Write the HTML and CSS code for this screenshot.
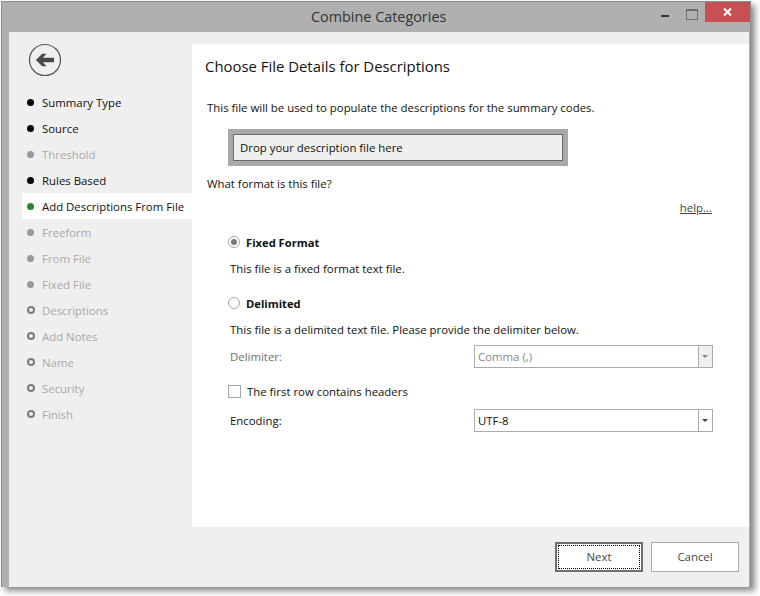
FILE: index.html
```html
<!DOCTYPE html>
<html lang="en">
<head>
  <meta charset="UTF-8">
  <title>Combine Categories</title>
  <link rel="stylesheet" href="styles.css">
</head>
<body>

  <div class="window">
    <div class="titlebar">
      <div class="title">Combine Categories</div>
      <div class="controls">
        <div class="ctl-min"></div>
        <div class="ctl-max"></div>
        <div class="ctl-close">
          <svg width="9" height="8" viewBox="0 0 9 8"><path d="M1 0.5L8 7.5M8 0.5L1 7.5" stroke="#fff" stroke-width="2" fill="none"/></svg>
        </div>
      </div>
    </div>

    <div class="content">
      <div class="sidebar">
        <div class="back">
          <svg width="34" height="34" viewBox="0 0 34 34">
            <circle cx="17" cy="17" r="15.5" fill="none" stroke="#555" stroke-width="1.2"/>
            <path d="M26 14.8H14.8L18.6 10.8H14.2L7.9 17L14.2 23.2H18.6L14.8 19.2H26Z" fill="#4a4a4a"/>
          </svg>
        </div>
        <div class="step done"><span class="dot"></span>Summary Type</div>
        <div class="step done"><span class="dot"></span>Source</div>
        <div class="step skipped"><span class="dot"></span>Threshold</div>
        <div class="step done"><span class="dot"></span>Rules Based</div>
        <div class="step active"><span class="dot"></span>Add Descriptions From File</div>
        <div class="step skipped"><span class="dot"></span>Freeform</div>
        <div class="step skipped"><span class="dot"></span>From File</div>
        <div class="step skipped"><span class="dot"></span>Fixed File</div>
        <div class="step todo"><span class="dot"></span>Descriptions</div>
        <div class="step todo"><span class="dot"></span>Add Notes</div>
        <div class="step todo"><span class="dot"></span>Name</div>
        <div class="step todo"><span class="dot"></span>Security</div>
        <div class="step todo"><span class="dot"></span>Finish</div>
      </div>

      <div class="main">
        <h1>Choose File Details for Descriptions</h1>
        <p class="intro">This file will be used to populate the descriptions for the summary codes.</p>
        <div class="dropzone"><div class="dropzone-inner">Drop your description file here</div></div>
        <p class="question">What format is this file?</p>
        <div class="help-row"><a href="#" class="help">help...</a></div>

        <div class="options">
          <div class="radio-row"><span class="radio checked"></span><b>Fixed Format</b></div>
          <p class="desc">This file is a fixed format text file.</p>
          <div class="radio-row second"><span class="radio"></span><b>Delimited</b></div>
          <p class="desc">This file is a delimited text file. Please provide the delimiter below.</p>
          <div class="field disabled">
            <label>Delimiter:</label>
            <div class="combo"><span class="combo-text">Comma (,)</span><span class="combo-btn"></span></div>
          </div>
          <div class="check-row"><span class="checkbox"></span>The first row contains headers</div>
          <div class="field field-encoding">
            <label>Encoding:</label>
            <div class="combo"><span class="combo-text">UTF-8</span><span class="combo-btn"></span></div>
          </div>
        </div>
      </div>
    </div>

    <div class="footer">
      <div class="btn btn-default"><span>Next</span></div>
      <div class="btn">Cancel</div>
    </div>
  </div>

</body>
</html>
```

FILE: styles.css
```css
html, body {
    margin: 0;
    height: 100%;
    background: #fff;
    overflow: hidden;
}
body {
    font-family: "Open Sans", Arial, sans-serif;
    font-size: 11.4px;
    color: #111;
}
p {
    margin: 0;
}
b {
    font-size: 11.2px;
}
.window {
    width: 750px;
    height: 586px;
    margin: 1px 0 0 1px;
    box-sizing: border-box;
    display: flex;
    flex-direction: column;
    background: #b0b0b0;
    border: 1px solid #8c8c8c;
    border-bottom: none;
    box-shadow: 4px 4px 6px rgba(0, 0, 0, 0.45);
}
.titlebar {
    height: 30px;
    flex: none;
    display: flex;
    justify-content: space-between;
    padding-left: 309px;
}
.title {
    font-size: 14.4px;
    line-height: 30px;
    color: #333;
}
.controls {
    display: flex;
    height: 20px;
}
.ctl-min {
    width: 8px;
    height: 2px;
    background: #333;
    margin: 13px 17px 0 0;
}
.ctl-max {
    width: 10px;
    height: 8px;
    border: 1px solid #6e6e6e;
    border-top-width: 2px;
    margin: 7px 7px 0 0;
}
.ctl-close {
    width: 45px;
    height: 20px;
    background: #c75050;
    display: flex;
    align-items: center;
    justify-content: center;
}
.content {
    flex: 1;
    display: flex;
    margin: 0 1px 0 7px;
    background: #efefef;
    padding-top: 12px;
    min-height: 0;
}
.sidebar {
    width: 183px;
    flex: none;
    padding-left: 13px;
    box-sizing: border-box;
}
.back {
    height: 46px;
    padding: 0 0 0 6px;
    margin-top: -1px;
    margin-bottom: 0;
}
.step {
    height: 26px;
    display: flex;
    align-items: center;
    padding-left: 5px;
    white-space: nowrap;
}
.dot {
    width: 7px;
    height: 7px;
    border-radius: 50%;
    margin-right: 8px;
    flex: none;
}
.step.done .dot {
    background: #000;
}
.step.active {
    background: #fff;
}
.step.active .dot {
    background: #2a862a;
}
.step.skipped, .step.todo {
    color: #a9a9a9;
}
.step.skipped .dot {
    background: #999;
}
.step.todo .dot {
    box-sizing: border-box;
    width: 8px;
    height: 8px;
    margin-right: 7px;
    border: 2px solid #7c7c7c;
}
.main {
    flex: 1;
    background: #fff;
    box-sizing: border-box;
    padding: 11px 36px 0 13px;
}
h1 {
    margin: 0;
    font-size: 14.9px;
    font-weight: normal;
    line-height: 22px;
}
.intro {
    margin: 22px 0 0 2px;
    line-height: 18px;
}
.dropzone {
    margin: 12px 0 0 23px;
    width: 340px;
    height: 37px;
    box-sizing: border-box;
    border: 5px solid #a9a9a9;
}
.dropzone-inner {
    height: 27px;
    line-height: 25px;
    box-sizing: border-box;
    border: 1px solid #6a6a6a;
    background: #efefef;
    padding-left: 6px;
}
.question {
    margin: 9px 0 0 2px;
    line-height: 18px;
}
.help-row {
    text-align: right;
    margin-top: 6px;
    padding-right: 1px;
    line-height: 18px;
}
.help {
    color: #444;
}
.options {
    margin: 16px 0 0 23px;
}
.radio-row {
    display: flex;
    align-items: center;
    height: 18px;
}
.radio-row.second {
    margin-top: 16px;
}
.radio {
    width: 12px;
    height: 12px;
    box-sizing: border-box;
    border: 1px solid #a5a5a5;
    border-radius: 50%;
    margin-right: 6px;
    display: flex;
    align-items: center;
    justify-content: center;
}
.radio.checked::after {
    content: "";
    width: 6px;
    height: 6px;
    border-radius: 50%;
    background: #777;
}
.desc {
    margin: 9px 0 0 2px;
    line-height: 18px;
}
.field {
    display: flex;
    align-items: center;
    justify-content: space-between;
    padding-left: 2px;
    margin-top: 6px;
}
.field-encoding {
    margin-top: 9px;
}
.field.disabled {
    color: #6d6d6d;
}
.combo {
    width: 239px;
    height: 23px;
    box-sizing: border-box;
    border: 1px solid #ababab;
    background: #fff;
    display: flex;
}
.combo-text {
    flex: 1;
    padding-left: 3px;
    line-height: 21px;
}
.combo-btn {
    width: 13px;
    border-left: 1px solid #ababab;
    position: relative;
}
.combo-btn::after {
    content: "";
    position: absolute;
    left: 3px;
    top: 9px;
    border-left: 3px solid transparent;
    border-right: 3px solid transparent;
    border-top: 3px solid #444;
}
.field.disabled .combo-text {
    color: #888;
}
.field.disabled .combo-btn {
    background: #efefef;
}
.field.disabled .combo-btn::after {
    border-top-color: #888;
}
.check-row {
    display: flex;
    align-items: center;
    margin-top: 14px;
    height: 18px;
}
.checkbox {
    width: 13px;
    height: 13px;
    box-sizing: border-box;
    border: 1px solid #a5a5a5;
    margin-right: 6px;
}
.footer {
    height: 60px;
    flex: none;
    margin: 0 1px 0 7px;
    background: #efefef;
    display: flex;
    justify-content: flex-end;
    gap: 8px;
    padding: 15px 10px 0 0;
    box-sizing: border-box;
}
.btn {
    width: 88px;
    height: 30px;
    box-sizing: border-box;
    border: 1px solid #ababab;
    background: #fff;
    color: #444;
    display: flex;
    align-items: center;
    justify-content: center;
    padding-bottom: 2px;
}
.btn-default {
    border: 2px solid #6e6e6e;
    padding: 1px;
}
.btn-default span {
    flex: 1;
    align-self: stretch;
    border: 1px dotted #000;
    display: flex;
    align-items: center;
    justify-content: center;
    padding-bottom: 1px;
}
```
